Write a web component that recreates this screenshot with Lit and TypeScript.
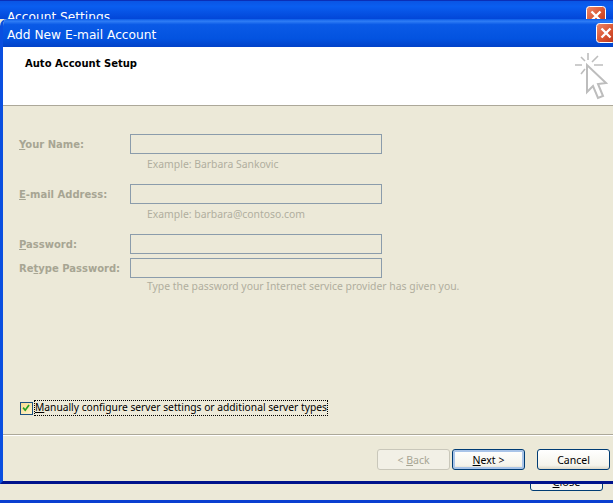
import { LitElement, html, css } from "lit";
import { customElement } from "lit/decorators.js";

const closeIcon = html`<svg viewBox="0 0 20 20" width="20" height="20" aria-hidden="true">
  <defs><linearGradient id="cg" x1="0" y1="0" x2="1" y2="1"><stop offset="0" stop-color="#ee8a6c"/><stop offset=".55" stop-color="#d9532f"/><stop offset="1" stop-color="#b8341c"/></linearGradient></defs>
  <rect x=".5" y=".5" width="19" height="19" rx="3" fill="url(#cg)" stroke="#fff"/>
  <path d="M5.5 5.5 14.5 14.5M14.5 5.5 5.5 14.5" stroke="#fff" stroke-width="2.4" fill="none"/>
</svg>`;

@customElement("app-root")
export class AppRoot extends LitElement {
  static styles = css`
    :host { display: block; position: relative; width: 613px; height: 503px; overflow: hidden; background: #0831d9; font-family: "Noto Sans", sans-serif; font-size: 10.5px; color: #000; }
    .back { position: absolute; inset: 0; background: #ece9d8; border-bottom: 3px solid #0a3fd0; }
    .back .bar { height: 19px; background: linear-gradient(#0a55e4, #0a5ef0 30%, #0246d8); color: #fff; font-family: "DejaVu Sans", sans-serif; font-size: 12.2px; padding: 9px 0 0 7px; box-sizing: border-box; display: flex; justify-content: space-between; border-top: 1px solid #0a2fb8; }
    .back .bar svg { margin: -4px 7px 0 0; }
    .closebtn { position: absolute; left: 530px; top: 469px; width: 73px; height: 22px; box-sizing: border-box; border: 1px solid #003c74; border-radius: 3px; background: #f6f5ee; text-align: center; line-height: 24px; font-size: 11px; }
    .front { position: absolute; left: 0; top: 19px; width: 640px; height: 465px; box-sizing: border-box; display: flex; flex-direction: column; background: #ece9d8; border-left: 3px solid #0a4fe0; border-bottom: 3px solid #00138c; border-radius: 7px 7px 0 0; overflow: hidden; }
    .title { height: 28px; margin-left: -3px; flex: none; box-sizing: border-box; padding: 3px 0 0 7px; display: flex; align-items: center; justify-content: space-between; background: linear-gradient(#0a5be8, #2f7df5 8%, #0a5ae6 20%, #0353e0 70%, #0242c8); color: #fff; font-family: "DejaVu Sans", sans-serif; font-size: 12.2px; width: 643px; }
    .title svg { margin-right: 27px; margin-top: -3px; }
    .head { height: 59px; flex: none; box-sizing: border-box; background: #fff; border-bottom: 1px solid #aca899; padding: 11px 0 0 22px; display: flex; justify-content: space-between; }
    .head b { font-family: "DejaVu Sans", sans-serif; font-size: 10px; }
    .head svg { margin: -7px 32px 0 0; }
    .form { flex: 1; display: flex; flex-direction: column; padding: 28px 0 18px 16px; color: #a7a593; }
    .row { display: grid; grid-template-columns: 111px 252px; align-items: center; height: 20px; }
    .row label { font-family: "DejaVu Sans", sans-serif; font-weight: 700; font-size: 10px; }
    .hint { margin: 3px 0 0 128px; height: 14px; line-height: 14px; font-size: 10.4px; color: #b0ae9e; }
    .hint.tight { margin-top: 1px; }
    .gap { height: 13px; }
    .row + .row { margin-top: 4px; }
    .input { height: 20px; box-sizing: border-box; border: 1px solid #8b9cab; background: #ece9d8; }
    u { text-decoration-thickness: 1px; }
    .check { margin: auto 0 0 1px; display: flex; align-items: center; gap: 1px; color: #000; font-size: 10.25px; }
    .box { width: 13px; height: 13px; box-sizing: border-box; border: 1px solid #1c5180; background: linear-gradient(135deg,#f6d98e,#fff3cc); display: flex; }
    .cap { border: 1px dotted #000; padding: 0 0 1px 0; line-height: 13px; }
    .foot { flex: none; height: 47px; border-top: 1px solid #aca899; box-shadow: inset 0 1px 0 #fff; display: flex; gap: 12px; padding: 14px 0 0 374px; box-sizing: border-box; }
    .btn { height: 21px; box-sizing: border-box; border: 1px solid #003c74; border-radius: 3px; background: linear-gradient(#fff, #f5f4ec 80%, #dcd8c8); font: inherit; padding: 0; width: 73px; color: #000; }
    .btn.dis { border-color: #c9c7ba; color: #a7a593; background: #f2f0e6; }
    .btn.def { box-shadow: inset 0 0 0 2px #a9c4e8; }
    .btns { display: flex; gap: 2px; }
  `;

  render() {
    return html`
      <div class="back">
        <div class="bar">Account Settings ${closeIcon}</div>
        <div class="closebtn"><u>C</u>lose</div>
      </div>
      <div class="front">
        <div class="title">Add New E-mail Account ${closeIcon}</div>
        <div class="head">
          <b>Auto Account Setup</b>
          <svg width="34" height="50" viewBox="0 0 34 50" fill="none" stroke="#bdbdbd" stroke-width="1.6" aria-hidden="true">
            <path d="M1 14H8M20 14H29M14 2V9M7 6 11 10M24 5 18 11M7 23 11 18"/>
            <path d="M13 14V41L19 35L24 47L29 45L24 33L32 32Z" stroke-width="2" fill="#fff"/>
          </svg>
        </div>
        <div class="form">
          <div class="row"><label><u>Y</u>our Name:</label><div class="input"></div></div>
          <div class="hint">Example: Barbara Sankovic</div>
          <div class="gap"></div>
          <div class="row"><label><u>E</u>-mail Address:</label><div class="input"></div></div>
          <div class="hint">Example: barbara@contoso.com</div>
          <div class="gap"></div>
          <div class="row"><label><u>P</u>assword:</label><div class="input"></div></div>
          <div class="row"><label>Re<u>t</u>ype Password:</label><div class="input"></div></div>
          <div class="hint tight">Type the password your Internet service provider has given you.</div>
          <div class="check">
            <span class="box"><svg viewBox="0 0 13 13" width="11" height="11" aria-hidden="true"><path d="M2.5 5.5 5 8.5 9.5 2.5" stroke="#21a121" stroke-width="2" fill="none"/></svg></span>
            <span class="cap"><u>M</u>anually configure server settings or additional server types</span>
          </div>
        </div>
        <div class="foot">
          <div class="btns"><button class="btn dis">&lt; <u>B</u>ack</button><button class="btn def"><u>N</u>ext &gt;</button></div>
          <button class="btn">Cancel</button>
        </div>
      </div>`;
  }
}
